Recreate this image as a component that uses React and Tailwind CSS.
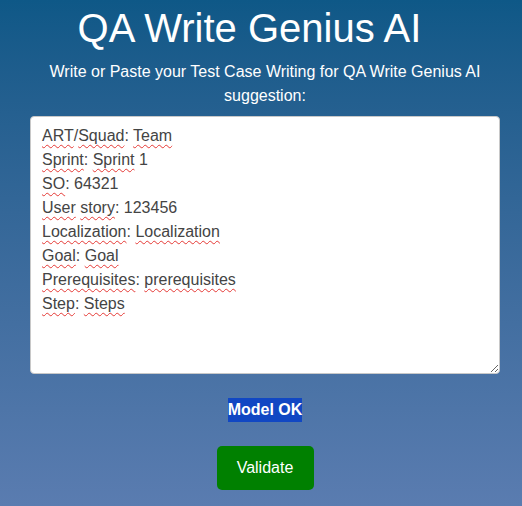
const lines = [
  [["ART", true], ["/", false], ["Squad", true], [": ", false], ["Team", true]],
  [["Sprint", true], [": ", false], ["Sprint", true], [" 1", false]],
  [["SO", true], [": 64321", false]],
  [["User", true], [" ", false], ["story", true], [": 123456", false]],
  [["Localization", true], [": ", false], ["Localization", true]],
  [["Goal", true], [": ", false], ["Goal", true]],
  [["Prerequisites", true], [": ", false], ["prerequisites", true]],
  [["Step", true], [": ", false], ["Steps", true]],
];

const App = () => {
  return (
    <div
      className="min-h-[506px] w-full bg-gradient-to-b from-[#0e5887] to-[#5a7cb0] pb-4"
      style={{ fontFamily: '"Liberation Sans", Arial, sans-serif' }}
    >
      <div className="ml-[30px] w-[470px] pt-2 flex flex-col items-center">
        <h1 className="text-[40px] leading-[40px] text-white text-center mr-[31px]">
          QA Write Genius AI
        </h1>
        <p className="mt-3 text-base leading-6 text-white text-center">
          Write or Paste your Test Case Writing for QA Write Genius AI suggestion:
        </p>

        {/* spellcheck squiggles drawn by hand, textarea look kept */}
        <div className="mt-2 w-[470px] h-[258px] bg-white border border-[#c8c8c8] rounded-[4px] pl-[11px] pt-[7px] text-base leading-6 text-[#444] resize overflow-auto">
          {lines.map((parts, i) => (
            <div key={i}>
              {parts.map(([text, wrong], j) =>
                wrong ? (
                  <span key={j} className="underline decoration-wavy decoration-[#e53935] decoration-1 underline-offset-[3px]">
                    {text}
                  </span>
                ) : (
                  <span key={j}>{text}</span>
                )
              )}
            </div>
          ))}
        </div>

        <div className="mt-6 h-6 flex items-center">
          <span className="inline-block bg-[#1147c3] text-white font-bold text-base leading-6">
            Model OK
          </span>
        </div>

        <button className="mt-6 bg-[#008000] text-white text-base rounded-[5px] w-[97px] h-[44px]">
          Validate
        </button>
      </div>
    </div>
  );
};

export default App;
